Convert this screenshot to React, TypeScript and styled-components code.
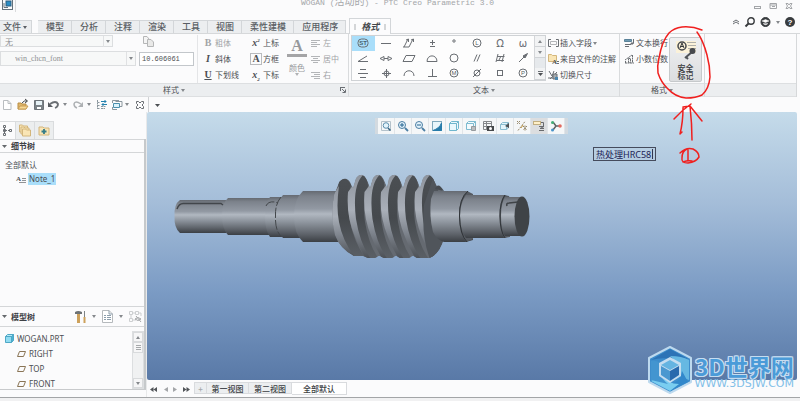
import React from "react";
import styled, { createGlobalStyle } from "styled-components";

const cjk = '"Noto Sans CJK SC", sans-serif';

const Global = createGlobalStyle`
  * { box-sizing: border-box; }
  body { margin: 0; background: #fbfbfc; color: #4c4f53; font: 8px/16px ${cjk}; overflow-x: hidden; }
  button, input, select { font: inherit; color: inherit; margin: 0; padding: 0; border: 0; background: none; }
  ul { list-style: none; margin: 0; padding: 0; }
  svg { display: block; flex: none; overflow: visible; }
`;

const Page = styled.div`
  min-height: 100vh;
  display: flex;
  flex-direction: column;
  position: relative;
`;

/* ---------- title bar and tabs ---------- */
const TitleBar = styled.header`
  display: grid;
  grid-template-columns: 1fr auto 1fr;
  height: 19px;
  padding: 0 7px 0 2px;
`;
const AppMark = styled.div`
  width: 14px;
  height: 12px;
  border-right: 1px solid #d9dadc;
`;
const Title = styled.h1`
  margin: -3px 0 0;
  font: 400 8px/12px "Liberation Mono", ${cjk};
  color: #a4a6a9;
  white-space: pre;
  span { font-size: 10px; }
`;
const WindowButtons = styled.div`
  display: flex;
  justify-content: flex-end;
  gap: 8px;
  padding-top: 1px;
  height: 10px;
`;
const TabRow = styled.div`
  display: flex;
  align-items: flex-end;
  height: 15px;
  border-bottom: 1px solid #d6d8da;
`;
const Tab = styled.button<{ $gap?: boolean }>`
  height: 13px;
  line-height: 12px;
  font-size: 9px;
  font-weight: 500;
  color: #5a5e64;
  background: #eceef0;
  border: 1px solid #d3d6d9;
  border-width: 1px 1px 0 0;
  padding: 0 7px 0 8px;
  display: flex;
  align-items: center;
  gap: 2px;
  margin-right: ${(p) => (p.$gap ? "6px" : "0")};
  &:first-child { padding: 0 4px 0 3px; }
`;
const ActiveTab = styled(Tab)`
  height: 16px;
  margin: 0 0 -1px 3px;
  padding: 0 4px;
  gap: 5px;
  background: #fcfcfd;
  border-width: 1px 1px 0 1px;
  font-weight: 700;
  font-style: italic;
  color: #44474b;
`;
const Grip = styled.span`
  width: 2px;
  height: 6px;
  border: 1px solid #d4d6d8;
`;
const HelpTools = styled.div`
  display: flex;
  align-items: center;
  gap: 5px;
  margin-left: auto;
  padding-right: 5px;
  height: 22px;
`;
const Plain = styled.button`
  display: flex;
  align-items: center;
`;

/* ---------- ribbon ---------- */
const Ribbon = styled.section`
  display: flex;
  margin-right: 3px;
  border-right: 1px solid #d6d8da;
`;
const Group = styled.div<{ $w?: number }>`
  display: flex;
  flex-direction: column;
  ${(p) => (p.$w ? `flex: 0 0 ${p.$w}px;` : "flex: 1;")}
  border-right: 1px solid #d9dbdd;
  &:last-child { border-right: 0; }
`;
const GroupBody = styled.div`
  display: flex;
  height: 49px;
  padding-top: 1px;
`;
const GroupLabel = styled.div`
  display: flex;
  justify-content: center;
  align-items: center;
  gap: 2px;
  height: 14px;
  line-height: 12px;
  background: #eceef0;
  border: 1px solid #dddfe1;
  border-width: 1px 0;
  position: relative;
`;
const Launcher = styled.button`
  position: absolute;
  right: 2px;
  top: 3px;
`;
const FontBox = styled.div`
  width: 198px;
  border-right: 1px solid #e4e5e7;
  display: grid;
  align-content: start;
  gap: 4px;
`;
const FontRow = styled.div`
  display: flex;
  align-items: center;
  gap: 3px;
`;
const SelectWrap = styled.label<{ $w: number; $tall?: boolean }>`
  display: grid;
  grid-template-columns: 1fr 8px;
  align-items: center;
  width: ${(p) => p.$w}px;
  height: ${(p) => (p.$tall ? 15 : 12)}px;
  background: #f7f8f8;
  border: 1px solid #dcdee0;
  select {
    appearance: none;
    height: 100%;
    width: 100%;
    outline: 0;
    color: #8f9194;
    padding-left: ${(p) => (p.$tall ? 14 : 4)}px;
    font: ${(p) => (p.$tall ? '8px "Liberation Serif", serif' : `8px ${cjk}`)};
    border-right: 1px solid #e0e1e3;
  }
  svg { justify-self: center; }
`;
const SizeInput = styled.input`
  width: 55px;
  height: 14px;
  border: 1px solid #c3c7cb;
  background: #fff;
  padding-left: 2px;
  font: 7px "Liberation Mono", monospace;
`;
const CopySlot = styled.span`
  margin-left: 27px;
`;
const Col = styled.div<{ $l?: number; $w?: number }>`
  display: grid;
  grid-template-rows: repeat(3, 16px);
  align-content: start;
  padding-left: ${(p) => p.$l ?? 5}px;
  ${(p) => (p.$w ? `width: ${p.$w}px;` : "")}
`;
const Item = styled.button<{ $off?: boolean; $gap?: number }>`
  display: flex;
  align-items: center;
  gap: ${(p) => p.$gap ?? 2}px;
  height: 16px;
  line-height: 16px;
  white-space: nowrap;
  color: ${(p) => (p.$off ? "#a2a4a7" : "#4c4f53")};
`;
const Glyph = styled.span<{ $i?: boolean; $u?: boolean; $box?: boolean }>`
  font: ${(p) => (p.$i ? "italic" : "normal")} 700 10px/10px "Liberation Serif", serif;
  width: 10px;
  text-align: center;
  text-decoration: ${(p) => (p.$u ? "underline" : "none")};
  outline: ${(p) => (p.$box ? "1px solid #b9bbbe" : "0")};
  sup, sub { font-size: 5px; line-height: 0; }
`;
const ColorButton = styled.button`
  width: 26px;
  display: flex;
  flex-direction: column;
  align-items: center;
  color: #96989b;
  line-height: 11px;
  padding-top: 4px;
  height: 44px;
  b {
    font: 700 16px/14px "Liberation Serif", serif;
    border-bottom: 3px solid #a4a4a6;
    width: 20px;
    padding-bottom: 1px;
    margin-bottom: 5px;
  }
`;
const Gallery = styled.div`
  width: 195px;
  height: 46px;
  margin-left: 2px;
  border: 1px solid #cfd2d5;
  background: #fdfdfd;
  display: grid;
  grid-template-columns: 1fr 11px;
`;
const Symbols = styled.div`
  display: grid;
  grid-template-columns: repeat(8, 1fr);
  grid-template-rows: repeat(3, 1fr);
`;
const SymbolButton = styled.button<{ $on?: boolean }>`
  display: grid;
  place-items: center;
  background: ${(p) => (p.$on ? "#a9defa" : "none")};
`;
const GalleryScroll = styled.div`
  display: grid;
  grid-template-rows: 11px 11px 1fr 12px;
  background: #e6e9ec;
  border-left: 1px solid #d4d6d9;
  button { display: grid; place-items: center; background: #f2f3f4; border-bottom: 1px solid #d0d3d6; }
`;
const SecurityWrap = styled.div`
  position: relative;
  width: 33px;
`;
const SecurityButton = styled.button`
  width: 33px;
  height: 45px;
  margin-top: 2px;
  border: 1px solid #c6c9cb;
  border-radius: 2px;
  background: linear-gradient(#eff0f1, #dcdee0);
  color: #35383b;
  font-weight: 500;
  line-height: 8px;
  display: flex;
  flex-direction: column;
  align-items: center;
  padding-top: 1px;
  gap: 5px;
`;
const Markup = styled.svg`
  position: absolute;
  left: -15px;
  top: -10px;
  pointer-events: none;
  z-index: 3;
`;

/* ---------- quick toolbar ---------- */
const QuickBar = styled.nav`
  display: flex;
  align-items: center;
  height: 15px;
  padding-left: 2px;
`;
const Quick = styled.button<{ $w: number }>`
  width: ${(p) => p.$w}px;
  height: 14px;
  display: flex;
  align-items: center;
`;
const QuickEnd = styled.span`
  height: 15px;
  border-left: 1px solid #d0d2d5;
  padding: 7px 0 0 6px;
`;

/* ---------- work area ---------- */
const Work = styled.main`
  flex: 1;
  display: flex;
`;
const Side = styled.aside`
  flex: 0 0 147px;
  display: flex;
  flex-direction: column;
  border-right: 1px solid #e8e9ea;
`;
const SideInner = styled.div`
  flex: 1;
  display: flex;
  flex-direction: column;
  margin-bottom: 7px;
  border-bottom: 1px solid #c8cacc;
`;
const SideTabs = styled.div`
  display: flex;
  padding-top: 9px;
`;
const SideTab = styled.button<{ $on?: boolean }>`
  width: ${(p) => (p.$on ? 16 : 19)}px;
  height: 18px;
  display: grid;
  place-items: center;
  background: ${(p) => (p.$on ? "#fbfbfc" : "#eceeef")};
  border: 1px solid #dadcde;
  border-left: 0;
  border-bottom: 0;
`;
const Panel = styled.section<{ $grow?: boolean }>`
  ${(p) => (p.$grow ? "flex: 1;" : "")}
  border-right: 2px solid #c6c9cb;
`;
const PanelHead = styled.div<{ $tall?: boolean }>`
  display: flex;
  align-items: center;
  height: ${(p) => (p.$tall ? 21 : 14)}px;
  border: 1px solid #d4d6d8;
  border-width: 1px 0;
  padding-left: 2px;
  gap: 4px;
  h2 { margin: 0; font-size: 8px; line-height: 12px; font-weight: 700; color: #3e4145; min-width: 30px; }
`;
const HeadTools = styled.div`
  display: flex;
  align-items: center;
  gap: 6px;
  margin-left: 30px;
`;
const DetailTree = styled.div`
  padding: 4px 0 0 5px;
  font-size: 8px;
`;
const Note = styled.button`
  display: flex;
  align-items: center;
  gap: 2px;
  margin-left: 12px;
  font: 8px/12px "Noto Sans", sans-serif;
  span { background: #a9defa; padding: 0 1px; }
`;
const ModelTree = styled.div`
  display: grid;
  grid-template-columns: 1fr 12px;
  padding: 4px 0 0 5px;
`;
const Nodes = styled.ul`
  font: 8px/15px "Noto Sans", sans-serif;
  height: 58px;
  overflow: hidden;
`;
const Node = styled.li<{ $child?: boolean }>`
  display: flex;
  align-items: center;
  gap: 3px;
  height: 15px;
  padding-left: ${(p) => (p.$child ? 12 : 0)}px;
`;
const VScroll = styled.div`
  display: grid;
  grid-template-rows: 10px 11px 1fr 10px;
  background: #f0f1f2;
  border: 1px solid #dcdee0;
  button { display: grid; place-items: center; background: #f6f6f7; border: 1px solid #d8dadc; }
`;

const Stage = styled.div`
  flex: 1;
  min-width: 0;
  display: flex;
  flex-direction: column;
  padding-right: 3px;
`;
const Canvas = styled.div`
  flex: 1;
  position: relative;
  border-radius: 2px;
  background: linear-gradient(#c5dbea, #a3bcd8 35%, #7b9bc4 67%, #5979a7);
`;
const ViewTools = styled.div`
  position: absolute;
  left: 228px;
  top: 6px;
  display: flex;
  height: 16px;
  background: #f5f7f8;
  border: 1px solid #d3dae0;
  border-width: 0 3px;
`;
const ViewTool = styled.button<{ $on?: boolean }>`
  width: 17px;
  display: grid;
  place-items: center;
  background: ${(p) => (p.$on ? "#dcdee0" : "none")};
  border-right: 1px solid #e1e5e8;
`;
const Model = styled.svg`
  position: absolute;
  left: 23px;
  top: 58px;
`;
const NoteInput = styled.input`
  position: absolute;
  left: 446px;
  top: 35px;
  width: 63px;
  height: 14px;
  border: 1px solid #454b5c;
  padding-left: 2px;
  font: 9px/12px "Noto Sans", ${cjk};
  color: #1d2355;
`;
const Caret = styled.span`
  position: absolute;
  left: 505px;
  top: 37px;
  width: 1px;
  height: 10px;
  background: #303550;
`;
const SheetBar = styled.div`
  height: 17px;
  display: flex;
  align-items: flex-start;
  padding: 2px 0 0 3px;
`;
const NavButtons = styled.div`
  display: flex;
  align-items: center;
  height: 14px;
  width: 44px;
  gap: 5px;
`;
const Sheet = styled.button<{ $on?: boolean; $w: number }>`
  width: ${(p) => p.$w}px;
  height: ${(p) => (p.$on ? 13 : 12)}px;
  font-weight: 500;
  line-height: 11px;
  color: #3a3d42;
  background: ${(p) => (p.$on ? "#fff" : "#eceef0")};
  border: 1px solid #d9dbde;
  border-left: 0;
`;
const AddSheet = styled(Sheet)`
  color: #a4a6a9;
  border-left: 1px solid #d9dbde;
`;
const Foot = styled.footer`
  height: 4px;
  background: #f1f1f2;
  border-top: 1px solid #a3a5a7;
`;

const Watermark = styled.div`
  position: absolute;
  right: 6px;
  bottom: 7px;
  display: flex;
  align-items: center;
  gap: 3px;
  color: #4b9bd8;
  white-space: nowrap;
  pointer-events: none;
`;
const Brand = styled.div`
  display: grid;
  justify-items: center;
  b {
    font: 700 23px/27px ${cjk};
    text-shadow: 1px 0 #c6dcf0, -1px 0 #c6dcf0, 0 1px #c6dcf0, 0 -1px #c6dcf0, 1px 1px #c6dcf0, -1px -1px #c6dcf0, 1px -1px #c6dcf0, -1px 1px #c6dcf0;
  }
  small { font: 11px/8px "DejaVu Sans", sans-serif; color: #82bfe8; }
`;

/* ---------- icons ---------- */
type IconProps = { w?: number; h?: number; c?: string; children: React.ReactNode };
const Icon = ({ w = 12, h = 12, c = "#6a6e73", children }: IconProps) => (
  <svg width={w} height={h} viewBox={`0 0 ${w} ${h}`} fill="none" stroke={c} aria-hidden="true">
    {children}
  </svg>
);
const Down = ({ c = "#85888c", s = 4 }: { c?: string; s?: number }) => (
  <Icon w={s} h={3}><path d={`M0 0H${s}L${s / 2} 3Z`} fill={c} stroke="none" /></Icon>
);
const Up = () => <Icon w={4} h={3}><path d="M0 3H4L2 0Z" fill="#85888c" stroke="none" /></Icon>;

const Lines = ({ a }: { a: "l" | "c" | "r" }) => (
  <Icon w={10} h={9} c="#b3b5b8">
    <path d={a === "l" ? "M0 1.5H9M0 3.5H6M0 5.5H9M0 7.5H6" : a === "c" ? "M0 1.5H9M2 3.5H7M0 5.5H9M2 7.5H7" : "M0 1.5H9M3 3.5H9M0 5.5H9M3 7.5H9"} />
  </Icon>
);
const Circled = ({ t }: { t: string }) => (
  <>
    <circle cx="6" cy="6" r="4" />
    <text x="6" y="8.2" fontSize="6" textAnchor="middle" fill="#595d62" stroke="none" fontFamily="Liberation Sans">{t}</text>
  </>
);
const Letter = ({ t }: { t: string }) => (
  <text x="6" y="9.5" fontSize="10" textAnchor="middle" fill="#6a6e73" stroke="none" fontFamily="DejaVu Sans">{t}</text>
);
const symbols: [string, React.ReactNode][] = [
  ["ST", <><rect x="1" y="2" width="10" height="8" rx="3.5" /><text x="6" y="8.3" fontSize="6" fontWeight="700" textAnchor="middle" fill="#47616f" stroke="none" fontFamily="Liberation Sans">ST</text></>],
  ["直线度", <path d="M1 6.500H11" />],
  ["全跳动", <path d="M0 10H6M1 10L5 2M6 10L10 2M3 3L5.500 2L5.500 5M8 3L10.500 2L10.500 5" />],
  ["正负", <path d="M6.500 3V8M4 5.500H9M4 9.500H9" />],
  ["度", <circle cx="6" cy="4" r="1.200" />],
  ["最小实体", <Circled t="L" />],
  ["欧姆", <Letter t="Ω" />],
  ["ω", <Letter t="ω" />],
  ["倾斜度", <path d="M11 9.500H1L10 4" />],
  ["对称", <path d="M4 6.500H8M4 4.500L0 6.500L4 8.500ZM8 4.500L12 6.500L8 8.500Z" />],
  ["平面度", <path d="M3 3.500H12L9 9.500H0Z" />],
  ["面轮廓度", <path d="M1 9.500H11C11 2 1 2 1 9.500Z" />],
  ["圆度", <circle cx="6" cy="6" r="4" />],
  ["平行度", <path d="M3 9.500L6 2.500M6 9.500L9 2.500" />],
  ["圆柱度", <path d="M2 10L4 2M8 10L10 2M2.500 8.500H10M3 4.500H10.500M5 8L7 4" />],
  ["跳动", <><path d="M2 10L8 4" /><path d="M6 4L10.500 1.500L8 6Z" fill="#6a6e73" /></>],
  ["对称度", <path d="M3 2.500H9M1 6.500H11M3 10.500H9" />],
  ["位置度", <><circle cx="6.500" cy="6.500" r="2.500" /><path d="M2 6.500H11M6.500 2V11" /></>],
  ["线轮廓度", <path d="M1 9C1 2 11 2 11 9" />],
  ["垂直度", <path d="M6.500 2V9.500M2 9.500H11" />],
  ["最大实体", <Circled t="M" />],
  ["直径", <><circle cx="6" cy="6" r="3" /><path d="M2 10L10 2" /></>],
  ["方形", <rect x="3.500" y="3.500" width="5" height="5" />],
  ["投影公差带", <Circled t="P" />],
];

const Magnify = ({ sign }: { sign: string }) => (
  <Icon c="#4c7fa4"><circle cx="5" cy="5" r="3.500" fill="#e4f3fb" /><path d="M8 8L11 11" strokeWidth="1.800" /><path d={sign} stroke="#23638f" /></Icon>
);
const viewIcons: [string, React.ReactNode][] = [
  ["重新调整", <Icon c="#b4c2cb"><path d="M1.500 1.500H10.500V10.500H1.500Z" /><circle cx="6" cy="5.500" r="2.800" fill="#e3f4fc" stroke="#5c8fae" /><path d="M8 8L10.500 10.500" stroke="#35627f" strokeWidth="1.500" /></Icon>],
  ["放大", <Magnify sign="M3 5H7M5 3V7" />],
  ["缩小", <Magnify sign="M3 5H7" />],
  ["重画", <Icon c="#7fa9bd"><rect x="1.500" y="1.500" width="9" height="9" fill="#e8f6fb" /><path d="M10.500 3V10.500H2C6 9 9 7 10.500 3" fill="#277caa" stroke="#277caa" /></Icon>],
  ["显示样式", <Icon c="#6fb6cd"><path d="M1.500 3.500H8.500V10.500H1.500ZM1.500 3.500L3.500 1.500H10.500L8.500 3.500M10.500 1.500V8.500L8.500 10.500" fill="#e9f8fd" /></Icon>],
  ["已保存方向", <Icon c="#7dbbd0"><path d="M1.500 3.500H8.500V9.500H1.500ZM1.500 3.500L3.500 1.500H10.500L8.500 3.500M10.500 1.500V8" fill="#f2fafd" /><path d="M6.500 6.500H10.500V10.500H6.500Z" fill="#b9bdc0" stroke="#969a9d" /></Icon>],
  ["视图管理器", <Icon c="#85888b"><path d="M1.500 1.500H9.500V9.500H1.500ZM1.500 3.500H9M1.500 6.500H6M4.500 1.500V9" /><path d="M5 6H12V11H5Z" fill="#46494b" stroke="none" /><circle cx="8.500" cy="8.500" r="1.500" fill="#fff" stroke="none" /></Icon>],
  ["透视图", <Icon c="#8abdd0"><path d="M1.500 4.500H7.500V9.500H1.500ZM1.500 4.500L3.500 2.500H9.500L7.500 4.500M9.500 2.500V8L7.500 9.500" fill="#e4f5fb" /><path d="M6 6L10 3V8Z" stroke="none" fill="#4b5053" /></Icon>],
  ["基准显示", <Icon c="#958769"><path d="M2 10.500L9 1.500M1 1L4 4M4 1L1 4M7 6L11 10M11 6L7 10M9 5.500V11" strokeDasharray="2 1" /><path d="M5 8L7 5" stroke="#c39a43" /></Icon>],
  ["注释显示", <Icon c="#696b6e"><rect x="0.500" y="1.500" width="7" height="3" fill="#fff0c8" stroke="#c2ae80" /><path d="M8 2.500H10.500V6M6 6.500H11L7 8.500H11M6 10.500H11" /></Icon>],
  ["旋转中心", <Icon c="#5d6263"><path d="M3 2L6 6L3 10M6 6H10" strokeWidth="1.500" /><circle cx="2.500" cy="2.500" r="1.500" fill="#43ad76" stroke="none" /><circle cx="10" cy="6" r="1.800" fill="#e26a5f" stroke="none" /><circle cx="2.500" cy="10" r="1.500" fill="#4993c9" stroke="none" /></Icon>],
];

const PlaneIcon = () => <Icon w={9} h={8} c="#8a7556"><path d="M2.500 1.500H8.500L6.500 6.500H0.500Z" /></Icon>;
const Folder = ({ x = 0, y = 0 }: { x?: number; y?: number }) => (
  <path d={`M${x} ${y}H${x + 3}L${x + 4} ${y + 1}H${x + 8}V${y + 7}H${x}Z`} fill="#f9e5b5" stroke="#d3b67c" />
);

/* ---------- worm shaft ---------- */
const threads = [360, 376.500, 393, 410, 427];
const wormOutline = "M334 195L339 182Q342 178 346 178.500Q350 180 351 184L353 188L356 178Q359 174 363 175Q367 177 370 188L373 178Q376 174 380 175Q384 177 387 188L389 178Q392 174 396 175Q400 177 403 188L406 178Q409 174 413 175Q417 177 420 188L423 178Q426 174 430 175Q433 177 435 182L438 188L446 192L444 238Q440 253 430 258H417L413 256L409 258H400L396 256L392 258H384L379 256L375 258H368L363 256H354Q340 249 335 235Q330 216 334 195Z";
const Shaft = () => (
  <Model width="365" height="95" viewBox="170 170 365 95" role="img" aria-label="WOGAN">
    <defs>
      <linearGradient id="metal" x1="0" y1="0" x2="0" y2="1">
        <stop offset="0" stopColor="#656a72" /><stop offset=".1" stopColor="#7c828b" />
        <stop offset=".35" stopColor="#9299a3" /><stop offset=".45" stopColor="#b1b8c1" />
        <stop offset=".62" stopColor="#8d949d" /><stop offset=".85" stopColor="#5d6269" />
        <stop offset="1" stopColor="#3b3f44" />
      </linearGradient>
      <linearGradient id="face" x1="0" y1="0" x2="0" y2="1">
        <stop offset="0" stopColor="#4b4f53" /><stop offset=".5" stopColor="#45494d" /><stop offset="1" stopColor="#5b6066" />
      </linearGradient>
      <linearGradient id="ridge" x1="0" y1="0" x2="0" y2="1">
        <stop offset="0" stopColor="#8d939c" /><stop offset=".42" stopColor="#aab0b9" />
        <stop offset=".7" stopColor="#7c828b" /><stop offset="1" stopColor="#4b4f54" />
      </linearGradient>
      <clipPath id="worm"><path d={wormOutline} /></clipPath>
    </defs>
    <g fill="url(#metal)">
      <path d="M180 200H226V233H180Q174 228 174.500 216Q174 204 180 200Z" />
      <path d="M228 198H272V235H228Q222 229 222 216Q222 203 228 198Z" />
      <path d="M270 197H290V237H270Q265 230 265 216Q265 203 270 197Z" />
      <path d="M283 195H303V238H283Q276 231 276 216Q276 202 283 195Z" />
      <path d="M303 191H345V242H303Q294 234 294 216Q294 199 303 191Z" />
    </g>
    <path d="M177 209Q179 203 184 203.500H221L223 205" fill="none" stroke="#42464b" strokeWidth="1.500" />
    <path d="M266 206Q268 201 275 202L278 203M281 197Q275 204 275.500 216Q275 232 282 237" fill="none" stroke="#43474b" strokeDasharray="10 2" />
    <g clipPath="url(#worm)">
      <path d={wormOutline} fill="#656a71" />
      <path d="M339 182Q346 174 351 185Q346 204 350 222Q355 245 366 258H356Q343 247 339 226Q334 200 339 182Z" fill="url(#face)" />
      <path d="M334 194L339 186Q336 207 339 222Q343 243 356 258H350Q330 240 331 216Z" fill="url(#ridge)" />
      {threads.map((x) => (
        <g key={x}>
          <path d={`M${x - 5} 184Q${x - 1} 174 ${x + 4} 176Q${x + 8} 180 ${x + 8} 187Q${x + 2} 200 ${x + 5} 222Q${x + 9} 246 ${x + 19} 259H${x + 7}Q${x - 4} 242 ${x - 6} 216Q${x - 9} 197 ${x - 5} 184Z`} fill="url(#face)" />
          <path d={`M${x + 3} 175Q${x - 4} 173 ${x - 6} 184L${x - 12} 192Q${x - 14} 216 ${x - 5} 237Q${x} 250 ${x + 6} 259H${x + 11}Q${x} 244 ${x - 4} 219Q${x - 8} 186 ${x + 3} 175Z`} fill="url(#ridge)" />
        </g>
      ))}
      <path d="M433 178L440 195V225L445 240Q441 254 430 259Q421 236 424 205Z" fill="#50555b" />
    </g>
    <path d="M435 189Q438 181 444 191Z" fill="#474b50" />
    <path d="M434 191H466L473 195V240L466 242H444Q437 240 433 232Q429 216 431 199Z" fill="url(#metal)" />
    <path d="M473 194L467 191Q459 198 459 216Q459 234 466 242L473 239Z" fill="#555a61" />
    <path d="M466 195H504L510 197V236L504 238H466Q460 230 460 216Q460 203 466 195Z" fill="url(#metal)" />
    <path d="M509 196L504 195Q499 203 499.500 216Q500 230 504 238L510 237" fill="#555a61" />
    <path d="M505 197H522V236H505Q501 230 501 216Q501 203 505 197Z" fill="url(#metal)" />
    <path d="M468 191Q459 199 459.500 216Q460 235 467 242M505 195Q500 202 500 216Q500 231 505 238" fill="none" stroke="#303438" />
    <ellipse cx="522" cy="216.500" rx="7.500" ry="20" fill="#3f4347" />
    <path d="M518 202L509 203Q506 203 507 206" fill="none" stroke="#3f4347" strokeWidth="1.500" />
  </Model>
);

export default function App() {
  return (
    <Page>
      <Global />
      <TitleBar>
        <AppMark>
          <Icon w={11} h={10} c="#65727d"><rect x="0.500" y="-0.500" width="10" height="10" /><rect x="4" y="1" width="5" height="5" fill="#2a8dc5" stroke="#2d5f80" /><path d="M2 3V7.500H6" /></Icon>
        </AppMark>
        <Title>WOGAN (<span>活动的</span>) - PTC Creo Parametric 3.0</Title>
        <WindowButtons>
          <Plain aria-label="最小化"><Icon w={8} h={8} c="#a3a5a8"><rect x="1.500" y="4.500" width="6" height="2" /></Icon></Plain>
          <Plain aria-label="最大化"><Icon w={8} h={8} c="#a3a5a8"><path d="M1 1.500H7.500V6.500H1ZM1 3H7M3 4.500H6" /></Icon></Plain>
          <Plain aria-label="关闭"><Icon w={8} h={8} c="#a3a5a8"><path d="M1 1.500H3L4 3L5 1.500H7L5.500 4L7 6.500H5L4 5L3 6.500H1L2.500 4Z" /></Icon></Plain>
        </WindowButtons>
      </TitleBar>

      <TabRow>
        <Tab $gap>文件<Down c="#5a5e64" /></Tab>
        {["模型", "分析", "注释", "渲染", "工具", "视图", "柔性建模", "应用程序"].map((t) => <Tab key={t}>{t}</Tab>)}
        <ActiveTab><Grip />格式<Grip /></ActiveTab>
        <HelpTools>
          <Plain aria-label="最小化功能区"><Icon w={8} h={6}><path d="M1 3L4 1L7 3M1 5L4 3L7 5" /></Icon></Plain>
          <Plain aria-label="搜索"><Icon w={10} h={10} c="#383b3e"><circle cx="6" cy="4" r="3.200" strokeWidth="1.400" /><path d="M3.500 6.500L0.500 9.500" strokeWidth="2" /></Icon></Plain>
          <Plain aria-label="学习中心"><Icon w={11} h={10} c="#383b3e"><circle cx="5.500" cy="5" r="4.500" fill="#383b3e" /><path d="M2 4L5.500 2.500L9 4L5.500 5.500ZM3 6.500Q5.500 9 8 6.500" fill="#fff" stroke="#fff" strokeWidth=".5" /></Icon></Plain>
          <Down />
          <Plain aria-label="帮助"><Icon w={10} h={10}><circle cx="5" cy="5" r="5" fill="#383b3e" stroke="none" /><text x="5" y="8" fontSize="8" fontWeight="700" textAnchor="middle" fill="#fff" stroke="none" fontFamily="Liberation Sans">?</text></Icon></Plain>
        </HelpTools>
      </TabRow>

      <Ribbon>
        <Group $w={349}>
          <GroupBody>
            <FontBox>
              <FontRow>
                <SelectWrap $w={113}><select aria-label="样式"><option>无</option></select><Down /></SelectWrap>
                <CopySlot><Icon w={11} h={11} c="#b5b6b7"><path d="M.5 .5H4L6 3V7.500H.5Z" fill="#f4f4f4" /><path d="M4.500 3.500H8L10.500 6V10.500H4.500Z" fill="#e9e9e8" /></Icon></CopySlot>
              </FontRow>
              <FontRow>
                <SelectWrap $w={136} $tall><select aria-label="字体"><option>win_chcn_font</option></select><Down /></SelectWrap>
                <SizeInput aria-label="文本高度" defaultValue="10.606061" />
              </FontRow>
            </FontBox>
            <Col $w={46}>
              <Item $off><Glyph>B</Glyph>粗体</Item>
              <Item><Glyph $i>I</Glyph>斜体</Item>
              <Item><Glyph $u>U</Glyph>下划线</Item>
            </Col>
            <Col $l={7} $w={40}>
              <Item><Glyph $i>x<sup>2</sup></Glyph>上标</Item>
              <Item><Glyph $box>A</Glyph>方框</Item>
              <Item><Glyph $i>x<sub>2</sub></Glyph>下标</Item>
            </Col>
            <ColorButton><b>A</b>颜色<Down c="#b0b2b4" /></ColorButton>
            <Col $l={1}>
              <Item $off><Lines a="l" />左</Item>
              <Item $off><Lines a="c" />居中</Item>
              <Item $off><Lines a="r" />右</Item>
            </Col>
          </GroupBody>
          <GroupLabel>样式<Down /><Launcher aria-label="样式对话框"><Icon w={6} h={6}><path d="M0 .5H5M.5 0V4M2 2L5 5M5.500 2.500V5.500H2.500" /></Icon></Launcher></GroupLabel>
        </Group>

        <Group $w={271}>
          <GroupBody>
            <Gallery>
              <Symbols>
                {symbols.map(([name, art], i) => <SymbolButton key={name} $on={i === 0} aria-label={name}><Icon>{art}</Icon></SymbolButton>)}
              </Symbols>
              <GalleryScroll>
                <button aria-label="上一行"><Up /></button>
                <button aria-label="下一行"><Down /></button>
                <span />
                <button aria-label="更多符号"><Icon w={5} h={6}><path d="M0 .5H5" /><path d="M0 2H5L2.500 5Z" fill="#4c4f53" stroke="none" /></Icon></button>
              </GalleryScroll>
            </Gallery>
            <Col $l={2}>
              <Item $gap={1}><Icon w={11} h={10}><path d="M3 1.500H.5V8.500H3M8 1.500H10.500V8.500H8" /><path d="M2.500 3.500H8.500V6.500H2.500Z" stroke="#b3b5b8" /></Icon>插入字段<Down /></Item>
              <Item $gap={1}><Icon w={11} h={10}><Folder x={0.5} y={0.5} /><text x="4" y="10" fontSize="7" fontWeight="700" fill="#4c4f53" stroke="none" fontFamily="Liberation Serif">A</text><path d="M9 7.500H11M9 9.500H11" /></Icon>来自文件的注解</Item>
              <Item $gap={1}><Icon w={11} h={10}><path d="M1 1L4 6L6 1M0 8H10M2 9L9 2" /><path d="M5 4H9V9H5Z" fill="#a5abb0" /><path d="M7 7H10V10H7Z" fill="#4b87ae" stroke="none" /></Icon>切换尺寸</Item>
            </Col>
          </GroupBody>
          <GroupLabel>文本<Down /></GroupLabel>
        </Group>

        <Group $w={85}>
          <GroupBody>
            <Col $l={4} $w={49}>
              <Item $gap={1}><Icon w={11} h={10}><path d="M.5 1.500H7.500V3.500H.5Z" fill="#6f9cb4" stroke="#5b8299" /><path d="M1 6.500H7M1 8.500H5M9.500 1V5.500H7M8.500 4L7 5.500L8.500 7" /></Icon>文本换行</Item>
              <Item $gap={1}><Icon w={11} h={10}><path d="M1.500 7V9M4.500 4.500H6.500V8.500H4.500ZM8.500 1V9M1 9H10M1 6L8 1" strokeDasharray="2 .5" /></Icon>小数位数</Item>
            </Col>
            <SecurityWrap>
              <SecurityButton>
                <Icon w={22} h={20}>
                  <path d="M1 2H21V14H1Z" fill="#fbf2d9" stroke="none" />
                  <path d="M12 3.500H21M13 6.500H21M13 9.500H21" stroke="#b0b0aa" />
                  <circle cx="7" cy="7" r="4" strokeWidth="1.500" stroke="#46494d" /><path d="M5 9L7 4L9 9M5.500 7.500H8.500" stroke="#35383b" />
                  <path d="M17 13L10 19M11 18L13 20" stroke="#505458" strokeWidth="2" /><circle cx="17.500" cy="12" r="3" fill="#46494d" stroke="none" />
                </Icon>
                <span>安全<br />标记</span>
              </SecurityButton>
              <Markup width="72" height="152" viewBox="655 25 72 152" fill="none" stroke="#f0201f" strokeWidth="1.500" strokeLinecap="round" strokeLinejoin="round" aria-hidden="true">
                <path d="M703 30Q693 26 683 27Q675 28 670 33Q663 41 660 58Q658 66 659 73Q662 82 668 88Q676 97 687 98Q697 98 703 95Q710 89 711 77Q711 66 708 55Q704 40 698 32" />
                <path d="M684 108Q684 122 681 134L683 132M691 106Q693 124 693 140M675 119Q683 110 692 104M684 107L691 106L703 121" />
                <path d="M681 153Q687 147 694 149Q700 152 700 157Q697 162 689 163Q682 163 683 158Q683 151 688 149M689 150L689 161M684 162Q689 160 693 161" />
              </Markup>
            </SecurityWrap>
          </GroupBody>
          <GroupLabel>格式<Down /></GroupLabel>
        </Group>
        <Group><GroupBody /><GroupLabel /></Group>
      </Ribbon>

      <QuickBar>
        <Quick $w={15} aria-label="新建"><Icon w={10} c="#b9bdc0"><path d="M1.500 1.500H6L9 4.500V10.500H1.500Z" fill="#fff" /><path d="M6 1.500V4.500H9" /></Icon></Quick>
        <Quick $w={16} aria-label="打开"><Icon><path d="M1 4H4L5 5H9V10H1Z" fill="#dfb66b" stroke="#b98d45" /><path d="M1 10L3 7H11L9 10Z" fill="#f8d995" stroke="#c79c55" /><path d="M5 4Q7 1 10 2M8 0L10.500 2L8 4" stroke="#45484b" /></Icon></Quick>
        <Quick $w={15} aria-label="保存"><Icon><path d="M1.500 1.500H10.500V10.500H1.500Z" fill="#7b8287" stroke="#6d7378" /><path d="M3 2H9V6H3Z" fill="#e7f2f6" stroke="none" /><path d="M4 8H8V10H4Z" fill="#fff" stroke="none" /></Icon></Quick>
        <Quick $w={15} aria-label="撤消"><Icon><path d="M2 5Q8 1 10 5Q10 8 7 9" strokeWidth="1.800" /><path d="M0 3V8H5Z" fill="#595d62" stroke="none" /></Icon></Quick>
        <Quick $w={9} aria-label="撤消列表"><Down /></Quick>
        <Quick $w={15} aria-label="重做"><Icon c="#aeb1b4"><path d="M9 5Q3 1 2 5Q2 8 5 9" strokeWidth="1.500" /><path d="M11 3V8H6Z" fill="#aeb1b4" stroke="none" /></Icon></Quick>
        <Quick $w={9} aria-label="重做列表"><Down /></Quick>
        <Quick $w={15} aria-label="重新生成"><Icon c="#8b979e"><path d="M1.500 1V10M1.500 3.500H4M1.500 6.500H4M1.500 9.500H4M5 7.500H10M5 9.500H9" strokeDasharray="2 .5" /><path d="M5 2.500H10M8.500 1L10 2.500L8.500 4M11 5.500H6M7.500 4L6 5.500L7.500 7" stroke="#2180ad" /></Icon></Quick>
        <Quick $w={14} aria-label="窗口"><Icon c="#8b979e"><path d="M1.500 4V1.500H8M4.500 2.500H11V7.500H9" /><path d="M2.500 4.500H8.500V8.500H2.500Z" fill="#dcf2fa" stroke="#4a8fad" /><path d="M1.500 8V10.500H6" /></Icon></Quick>
        <Quick $w={11} aria-label="窗口列表"><Down /></Quick>
        <Quick $w={12} aria-label="关闭窗口"><Icon w={8} h={8}><path d="M.5 .5H2.500L4 2L5.500 .5H7.500V2.500L6 4L7.500 5.500V7.500H5.500L4 6L2.500 7.500H.5V5.500L2 4L.5 2.500Z" /></Icon></Quick>
        <QuickEnd><Down s={5} c="#4c4f53" /></QuickEnd>
      </QuickBar>

      <Work>
        <Side>
          <SideInner>
            <SideTabs>
              <SideTab $on aria-label="模型树"><Icon><path d="M1.500 .5H3.500V2.500H1.500ZM1.500 4.500H3.500V6.500H1.500ZM1.500 8.500H3.500V10.500H1.500ZM7.500 4.500H9.500V6.500H7.500Z" /><path d="M2.500 3V8M4 5.500H7" strokeDasharray="1 1" /></Icon></SideTab>
              <SideTab aria-label="文件夹浏览器"><Icon><Folder x={0.5} y={0} /><Folder x={2} y={2} /><Folder x={3.5} y={4} /></Icon></SideTab>
              <SideTab aria-label="收藏夹"><Icon><path d="M1 2H5L6 3H11V10H1Z" fill="#f9e5b5" stroke="#d3b67c" /><path d="M6 4V9M3.500 6.500H8.500" stroke="#347c88" strokeWidth="1.800" /></Icon></SideTab>
            </SideTabs>
            <Panel $grow>
              <PanelHead><Down s={5} c="#65686c" /><h2>细节树</h2></PanelHead>
              <DetailTree>
                全部默认
                <Note><Icon w={9} h={9}><text x="-1" y="6" fontSize="7" fontWeight="700" fill="#4c4f53" stroke="none" fontFamily="Liberation Serif">A</text><path d="M5 3.500H9M5 5.500H9M2 7.500H9" stroke="#919396" /></Icon><span>Note_1</span></Note>
              </DetailTree>
            </Panel>
            <Panel>
              <PanelHead $tall>
                <Down s={5} c="#65686c" /><h2>模型树</h2>
                <HeadTools>
                  <Plain aria-label="设置"><Icon w={11} h={14}><path d="M0 2Q3 0 7 2V4H0Z" fill="#6d7275" stroke="none" /><path d="M3.500 4V13" stroke="#cda15b" strokeWidth="3" /><path d="M9.500 1V7" stroke="#7d8285" /><path d="M9.500 7V13" stroke="#cda15b" strokeWidth="2" /></Icon></Plain>
                  <Down />
                  <Plain aria-label="显示"><Icon w={11} h={13} c="#b5b9bc"><path d="M.5 .5H7L10.500 4V12.500H.5Z" fill="#fff" /><path d="M7 .5V4H10.500M2 5.500H4M5 5.500H9M2 7.500H4M5 7.500H9M2 9.500H4M5 9.500H9" stroke="#8b9dab" /></Icon></Plain>
                  <Down />
                  <Plain aria-label="过滤器"><Icon w={13} h={13} c="#cdcfd1"><path d="M.5 1.500H3.500V4.500H.5ZM.5 8.500H3.500V11.500H.5ZM6.500 1.500H9.500V4.500H6.500ZM4 3H6M2 5V8M4 10H7M10 3H12V6" /><path d="M6 9Q9 6 12 9Q9 12 6 9M7 6L12 12" stroke="#a4a6a8" /></Icon></Plain>
                </HeadTools>
              </PanelHead>
              <ModelTree>
                <Nodes>
                  <Node><Icon w={9} h={9} c="#4fa8c6"><path d="M.5 2.500H6.500V8.500H.5Z" fill="#91dcf2" /><path d="M.5 2.500L2.500 .5H8.500L6.500 2.500Z" fill="#b5e9f8" /><path d="M8.500 .5V6.500L6.500 8.500V2.500Z" fill="#4bb2d2" /></Icon>WOGAN.PRT</Node>
                  {["RIGHT", "TOP", "FRONT"].map((n) => <Node key={n} $child><PlaneIcon />{n}</Node>)}
                </Nodes>
                <VScroll>
                  <button aria-label="向上滚动"><Up /></button>
                  <button aria-label="滑块"><Icon w={5} h={7} c="#a5a8aa"><path d="M0 1.500H5M0 3.500H5M0 5.500H5" /></Icon></button>
                  <span />
                  <button aria-label="向下滚动"><Down /></button>
                </VScroll>
              </ModelTree>
            </Panel>
          </SideInner>
        </Side>

        <Stage>
          <Canvas>
            <ViewTools>
              {viewIcons.map(([name, art], i) => <ViewTool key={name} $on={i === 9} aria-label={name}>{art}</ViewTool>)}
            </ViewTools>
            <Shaft />
            <NoteInput aria-label="注解" defaultValue="热处理HRC58" />
            <Caret />
          </Canvas>
          <SheetBar>
            <NavButtons>
              <Plain aria-label="第一个"><Icon w={7} h={5}><path d="M3.500 0V5L0 2.500ZM7 0V5L3.500 2.500Z" fill="#515458" stroke="none" /></Icon></Plain>
              <Plain aria-label="上一个"><Icon w={6} h={5}><path d="M6 0V5L2 2.500Z" fill="#a4a6a9" stroke="none" /></Icon></Plain>
              <Plain aria-label="下一个"><Icon w={5} h={5}><path d="M0 0V5L4 2.500Z" fill="#a4a6a9" stroke="none" /></Icon></Plain>
              <Plain aria-label="最后一个"><Icon w={7} h={5}><path d="M0 0V5L3.500 2.500ZM3.500 0V5L7 2.500Z" fill="#515458" stroke="none" /></Icon></Plain>
            </NavButtons>
            <AddSheet $w={13} aria-label="新建选项卡">+</AddSheet>
            <Sheet $w={42}>第一视图</Sheet>
            <Sheet $w={43}>第二视图</Sheet>
            <Sheet $w={55} $on>全部默认</Sheet>
          </SheetBar>
        </Stage>
      </Work>
      <Foot />
      <Watermark>
        <svg width="44" height="48" viewBox="0 0 44 48" aria-hidden="true">
          <path d="M22 1L43 12V36L22 47L1 36V12Z" fill="#3d8dcc" stroke="#bdd9ee" strokeWidth="2" strokeLinejoin="round" />
          <path d="M22 3L40 13L31 18Q22 9 3 14Z" fill="#2c73b6" />
          <path d="M41 14V34L31 30Q34 21 22 10Q34 10 41 14" fill="#66b8e2" />
          <path d="M40 36L22 45V38Q33 36 34 25Z" fill="#3288cb" />
          <path d="M22 45L3 35L12 29Q20 38 31 38Z" fill="#7acdf0" />
          <path d="M3 34V15Q8 13 13 18Q8 28 20 38Z" fill="#4395d0" />
          <path d="M22 11L33 17V30L22 37L11 30V17Z" fill="#c5ddf0" />
          <path d="M22 14L31 19L22 24L13 19Z" fill="#65b4e1" /><path d="M13 20L22 25V35L13 29Z" fill="#4a98d0" /><path d="M31 20L22 25V35L31 29Z" fill="#2869ad" />
        </svg>
        <Brand><b>3D世界网</b><small>WWW.3DSJW.COM</small></Brand>
      </Watermark>
    </Page>
  );
}
